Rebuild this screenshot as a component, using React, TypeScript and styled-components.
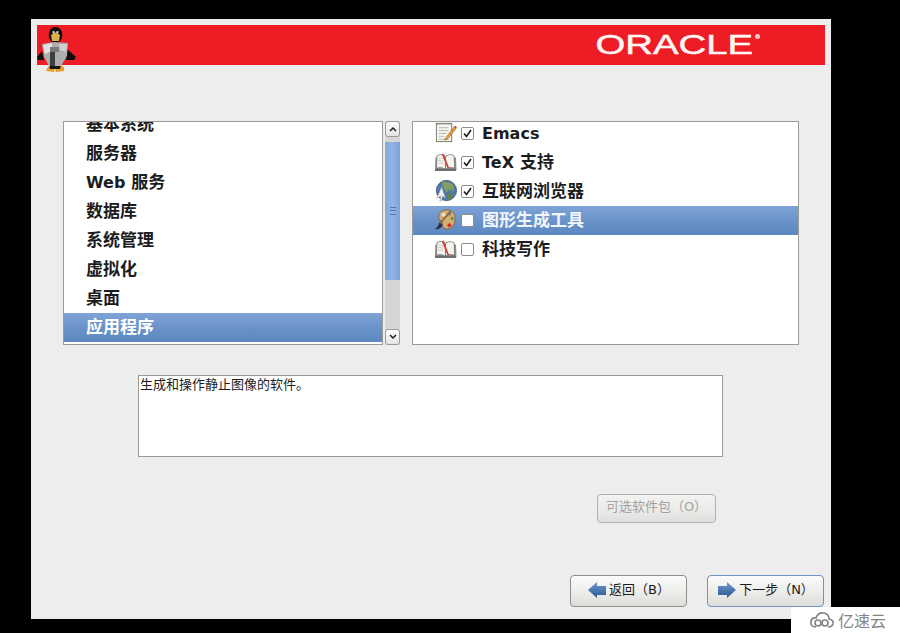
import type { ReactElement } from "react";
import styled, { createGlobalStyle } from "styled-components";

const GlobalStyle = createGlobalStyle`
  html, body {
    margin: 0;
    height: 100%;
    background: #000;
    overflow: hidden;
  }
  body {
    font-family: "DejaVu Sans", "Noto Sans CJK SC", sans-serif;
  }
`;

const Installer = styled.div`
  position: relative;
  box-sizing: border-box;
  width: 800px;
  height: 600px;
  margin: 19px 0 0 31px;
  padding: 6px;
  background: #ededed;
`;

const Banner = styled.header`
  display: flex;
  align-items: center;
  justify-content: flex-end;
  height: 40px;
  padding-right: 72px;
  background: #ee1c25;
`;

const Wordmark = styled.span`
  display: block;
  font-family: "Liberation Sans", sans-serif;
  font-size: 28px;
  line-height: 28px;
  color: #fdf6f4;
  -webkit-text-stroke: 0.5px #fdf6f4;
  transform: scaleX(1.37);
  transform-origin: right center;
`;

const Registered = styled.span`
  position: absolute;
  top: 15px;
  left: 724px;
  width: 5px;
  height: 5px;
  border-radius: 50%;
  background: #f6c9c6;
`;

const PenguinMark = styled.svg`
  position: absolute;
  top: 7px;
  left: 6px;
  width: 39px;
  height: 47px;
`;

const Selector = styled.section`
  display: flex;
  margin: 56px 0 0 26px;
  height: 224px;
`;

const ListFrame = styled.div<{ $width: number }>`
  box-sizing: border-box;
  width: ${(p) => p.$width}px;
  height: 224px;
  background: #fff;
  border: 1px solid #9a9a96;
  overflow: hidden;
`;

const GroupInner = styled.div`
  margin-top: -12px;
`;

const GroupRow = styled.div<{ $selected?: boolean }>`
  display: flex;
  align-items: center;
  height: 29px;
  padding-left: 22px;
  color: ${(p) => (p.$selected ? "#fff" : "#1c1c1c")};
  background: ${(p) =>
    p.$selected ? "linear-gradient(#7fa3d6, #6690c8 60%, #5d88c0)" : "transparent"};
`;

const Label = styled.span`
  margin-bottom: 1px;
  font-size: 17px;
  font-weight: 700;
  line-height: 20px;
  white-space: pre;
`;

const LatinRun = styled.span`
  font-size: 16px;
`;

const Scrollbar = styled.div`
  display: flex;
  flex-direction: column;
  width: 15px;
  height: 224px;
  margin: 0 12px 0 2px;
  background: #d6d6d4;
`;

const ScrollButton = styled.div`
  display: flex;
  align-items: center;
  justify-content: center;
  box-sizing: border-box;
  height: 16px;
  background: linear-gradient(#fdfdfd, #e4e4e2);
  border: 1px solid #9a9a96;
  border-radius: 3px;
`;

const Thumb = styled.div`
  display: flex;
  align-items: center;
  justify-content: center;
  height: 138px;
  margin-top: 5px;
  background: linear-gradient(90deg, #82a8dc, #92b4e6 50%, #7ca2d8);
`;

const Spacer = styled.div`
  flex: 1;
`;

const ThumbGrip = styled.div`
  position: relative;
  width: 6px;
  height: 6px;
  border-top: 1px solid #4f76aa;
  border-bottom: 1px solid #4f76aa;
  &::after {
    content: "";
    position: absolute;
    top: 2px;
    left: 0;
    right: 0;
    height: 1px;
    background: #4f76aa;
  }
`;

const PackageInner = styled.div`
  margin-top: -3px;
`;

const PackageRow = styled.div<{ $selected?: boolean }>`
  display: flex;
  align-items: center;
  height: 29px;
  padding-left: 21px;
  color: ${(p) => (p.$selected ? "#f2f6fc" : "#1c1c1c")};
  background: ${(p) =>
    p.$selected ? "linear-gradient(#7fa3d6, #6690c8 60%, #5d88c0)" : "transparent"};
`;

const IconSlot = styled.svg`
  flex: none;
  width: 23px;
  height: 23px;
  margin: 0 1px 2px 0;
`;

const CheckBox = styled.span`
  display: flex;
  align-items: center;
  justify-content: center;
  flex: none;
  box-sizing: border-box;
  width: 13px;
  height: 13px;
  margin: 0 8px 0 3px;
  background: #fff;
  border: 1px solid #8c8c88;
  border-radius: 2px;
`;

const Description = styled.div`
  box-sizing: border-box;
  width: 585px;
  height: 82px;
  margin: 30px 0 0 101px;
  padding: 1px 1px;
  background: #fff;
  border: 1px solid #9a9a96;
  font-size: 13px;
  line-height: 16px;
  color: #1c1c1c;
`;

const OptionalRow = styled.div`
  display: flex;
  justify-content: flex-end;
  margin-top: 37px;
  padding-right: 109px;
`;

const ActionButton = styled.button<{ $width: number; $height: number; $focused?: boolean }>`
  display: flex;
  align-items: center;
  justify-content: center;
  gap: 2px;
  box-sizing: border-box;
  width: ${(p) => p.$width}px;
  height: ${(p) => p.$height}px;
  padding: 0 0 3px;
  font-family: inherit;
  font-size: 13px;
  line-height: 16px;
  color: #1c1c1c;
  background: linear-gradient(#fbfbfb, #ececea 55%, #dcdcd9);
  border: 1px solid ${(p) => (p.$focused ? "#6f93c2" : "#8f8f8b")};
  border-radius: 4px;
  &:disabled {
    color: #a2a2a0;
    border-color: #b0b0ac;
    background: linear-gradient(#f2f2f1, #ebebe9 55%, #dfdfdd);
  }
`;

const NavRow = styled.div`
  display: flex;
  justify-content: flex-end;
  gap: 20px;
  margin-top: 52px;
  padding-right: 1px;
`;

const ArrowIcon = styled.svg`
  flex: none;
  width: 20px;
  height: 20px;
`;

const Watermark = styled.div`
  position: fixed;
  right: 0;
  bottom: 0;
  display: flex;
  align-items: center;
  box-sizing: border-box;
  width: 109px;
  height: 26px;
  padding-left: 18px;
  gap: 3px;
  background: #fff;
  color: #858585;
  font-family: "Noto Sans CJK SC", sans-serif;
  font-size: 16px;
  line-height: 26px;
`;

const CloudIcon = styled.svg`
  flex: none;
  width: 26px;
  height: 18px;
`;

const groups = ["基本系统", "服务器", "Web 服务", "数据库", "系统管理", "虚拟化", "桌面", "应用程序"];

type IconKind = "note" | "book" | "globe" | "palette";

const packages: { name: string; icon: IconKind; checked: boolean; selected?: boolean }[] = [
  { name: "Emacs", icon: "note", checked: true },
  { name: "TeX 支持", icon: "book", checked: true },
  { name: "互联网浏览器", icon: "globe", checked: true },
  { name: "图形生成工具", icon: "palette", checked: false, selected: true },
  { name: "科技写作", icon: "book", checked: false },
];

// latin words sit a size below the cjk glyphs in the original font pairing
const RowLabel = ({ text }: { text: string }) => (
  <Label>
    {text.split(/([A-Za-z]+)/).map((part, i) =>
      /^[A-Za-z]+$/.test(part) ? <LatinRun key={i}>{part}</LatinRun> : part
    )}
  </Label>
);

const Penguin = () => (
  <PenguinMark viewBox="0 0 39 47">
    <path d="M11 41 Q14 38 18 42 L17 46 L9 45 Z" fill="#e99c2a" />
    <path d="M18 42 Q22 38 27 41 L27 45 L19 46 Z" fill="#e99c2a" />
    <path d="M12 38 H24 L23 43 H13 Z" fill="#151515" />
    <path d="M5 25 L0 31 L1 34 L7 34 Z" fill="#0e0e0e" />
    <path d="M30 23 L39 31 L37 34 L29 34 Z" fill="#0e0e0e" />
    <ellipse cx="18.5" cy="9" rx="6.8" ry="8" fill="#0c0c0c" />
    <path d="M14 9 Q18.5 4 23 9 L22 15 H15 Z" fill="#d9b04a" />
    <circle cx="16.6" cy="6.2" r="1.1" fill="#eee" />
    <circle cx="20.4" cy="6.2" r="1.1" fill="#eee" />
    <path d="M5 18 L17 16 L31 17 L30 30 L24 40 H12 L7 31 Z" fill="#adadab" />
    <path d="M6 19 L15 17 L15 25 L8 28 Z" fill="#e2e2e0" />
    <path d="M22 18 L30 18 L29 26 L23 24 Z" fill="#cfcfcd" />
    <rect x="13" y="26" width="5" height="14" fill="#3e3e3e" />
    <rect x="13" y="21" width="9" height="5" fill="#7a7a78" />
  </PenguinMark>
);

const NoteIcon = () => (
  <IconSlot viewBox="0 0 24 24">
    <rect x="2.5" y="2.5" width="16" height="19" fill="#f6f5ee" stroke="#77776f" />
    <path d="M3 3 h15" stroke="#8a8a82" strokeWidth="2" strokeDasharray="1 1" />
    <path d="M5 7h10M5 10h10M5 13h8M5 16h6M5 19h10" stroke="#b5b5ac" />
    <path d="M12 18 L21 6 L23 8 L14 19 L11 20 Z" fill="#e8a33a" stroke="#8a5a1c" strokeWidth=".6" />
    <path d="M21 6 L23 8 L23.8 6.6 L22.4 5 Z" fill="#c43a2c" />
  </IconSlot>
);

const BookIcon = () => (
  <IconSlot viewBox="0 0 24 24">
    <path d="M1 21 L1.5 8 L11 5 L12 7 L13 5 L23 8 L23.5 21 L13 21 L11 21 Z" fill="#8d8d88" />
    <path d="M2.5 19 L3 6 Q8 3 12 7 L12 20 Q7 17 2.5 19 Z" fill="#f4f3ee" stroke="#66665f" strokeWidth=".7" />
    <path d="M21.5 19 L21 6 Q16 3 12 7 L12 20 Q17 17 21.5 19 Z" fill="#f4f3ee" stroke="#66665f" strokeWidth=".7" />
    <path d="M9 4 L15 19" stroke="#cf3b36" strokeWidth="1.8" />
    <path d="M4.5 8.5 Q7 8 10 9.5M4.5 11 Q7 10.5 10 12M4.5 13.5 Q7 13 10 14.5" stroke="#b9b9b3" strokeWidth=".7" fill="none" />
    <path d="M1 21 H23" stroke="#55554f" strokeWidth="1.4" />
  </IconSlot>
);

const GlobeIcon = () => (
  <IconSlot viewBox="0 0 24 24">
    <circle cx="13" cy="12" r="10.5" fill="#4f79ad" stroke="#3c5a84" />
    <path d="M8 4 Q14 1 20 6 L21 13 L16 11 L13 14 L10 9 Z" fill="#7fa060" />
    <path d="M14 16 L20 14 L18 21 L14 22 Z" fill="#5f8449" />
    <path d="M3 20 L8 8 L12 20 L9 18 L7.5 23 L6 23 L7 18 Z" fill="#f0f0ee" stroke="#8a8a88" strokeWidth=".5" />
  </IconSlot>
);

const PaletteIcon = () => (
  <IconSlot viewBox="0 0 24 24">
    <path d="M5 9 Q5 2 14 2 Q23 3 22 12 Q21 22 13 22 Q8 21 9 16 Q9 13 6 13 Q5 12 5 9 Z" fill="#d7ad72" stroke="#7a5a30" strokeWidth=".8" />
    <circle cx="10" cy="7" r="1.8" fill="#e9e9e4" />
    <circle cx="16" cy="6" r="1.8" fill="#4c7cbe" />
    <circle cx="19" cy="11" r="1.8" fill="#5f9e4c" />
    <circle cx="16" cy="18" r="2" fill="#cf3030" />
    <path d="M18 3 L5 17" stroke="#8f6b3a" strokeWidth="2" />
    <path d="M6 15 L9 18 Q6 23 1 22 Q4 20 6 15 Z" fill="#26303e" />
  </IconSlot>
);

const iconFor: Record<IconKind, () => ReactElement> = {
  note: NoteIcon,
  book: BookIcon,
  globe: GlobeIcon,
  palette: PaletteIcon,
};

const Check = () => (
  <svg width="9" height="9" viewBox="0 0 9 9">
    <path d="M1 4.5 L3.5 7.5 L8 1" fill="none" stroke="#1c1c1c" strokeWidth="1.6" />
  </svg>
);

const Chevron = ({ up }: { up?: boolean }) => (
  <svg width="8" height="6" viewBox="0 0 8 6">
    <path d={up ? "M1 5 L4 2 L7 5" : "M1 1 L4 4 L7 1"} fill="none" stroke="#1c1c1c" strokeWidth="1.5" />
  </svg>
);

const Arrow = ({ back }: { back?: boolean }) => (
  <ArrowIcon viewBox="0 0 20 20">
    <defs>
      <linearGradient id={back ? "ab" : "an"} x1="0" y1="0" x2="0" y2="1">
        <stop offset="0" stopColor="#6f9ad0" />
        <stop offset="1" stopColor="#28578f" />
      </linearGradient>
    </defs>
    <path
      d={back ? "M1 10 L10 2 V6 H19 V15 H10 V18 Z" : "M19 10 L10 2 V6 H1 V15 H10 V18 Z"}
      fill={`url(#${back ? "ab" : "an"})`}
    />
  </ArrowIcon>
);

const App = () => {
  return (
    <>
      <GlobalStyle />
      <Installer>
        <Banner>
          <Wordmark>ORACLE</Wordmark>
        </Banner>
        <Registered />
        <Penguin />
        <Selector>
          <ListFrame $width={320}>
            <GroupInner>
              {groups.map((g, i) => (
                <GroupRow key={g} $selected={i === groups.length - 1}>
                  <RowLabel text={g} />
                </GroupRow>
              ))}
            </GroupInner>
          </ListFrame>
          <Scrollbar>
            <ScrollButton>
              <Chevron up />
            </ScrollButton>
            <Thumb>
              <ThumbGrip />
            </Thumb>
            <Spacer />
            <ScrollButton>
              <Chevron />
            </ScrollButton>
          </Scrollbar>
          <ListFrame $width={387}>
            <PackageInner>
              {packages.map((p) => {
                const Icon = iconFor[p.icon];
                return (
                  <PackageRow key={p.name} $selected={p.selected}>
                    <Icon />
                    <CheckBox>{p.checked && <Check />}</CheckBox>
                    <RowLabel text={p.name} />
                  </PackageRow>
                );
              })}
            </PackageInner>
          </ListFrame>
        </Selector>
        <Description>生成和操作静止图像的软件。</Description>
        <OptionalRow>
          <ActionButton disabled $width={119} $height={29}>
            可选软件包（O）
          </ActionButton>
        </OptionalRow>
        <NavRow>
          <ActionButton $width={117} $height={32}>
            <Arrow back />
            返回（B）
          </ActionButton>
          <ActionButton $width={117} $height={32} $focused>
            <Arrow />
            下一步（N）
          </ActionButton>
        </NavRow>
      </Installer>
      <Watermark>
        <CloudIcon viewBox="0 0 26 18">
          <path d="M7 16 Q1 16 2 10 Q3 6 7 7 Q9 1 15 2 Q20 3 20 8 Q25 9 24 13 Q23 16 19 16" fill="none" stroke="#858585" strokeWidth="1.7" />
          <circle cx="9" cy="12" r="3" fill="none" stroke="#858585" strokeWidth="1.7" />
          <circle cx="16" cy="12" r="3" fill="none" stroke="#858585" strokeWidth="1.7" />
        </CloudIcon>
        亿速云
      </Watermark>
    </>
  );
};

export default App;
